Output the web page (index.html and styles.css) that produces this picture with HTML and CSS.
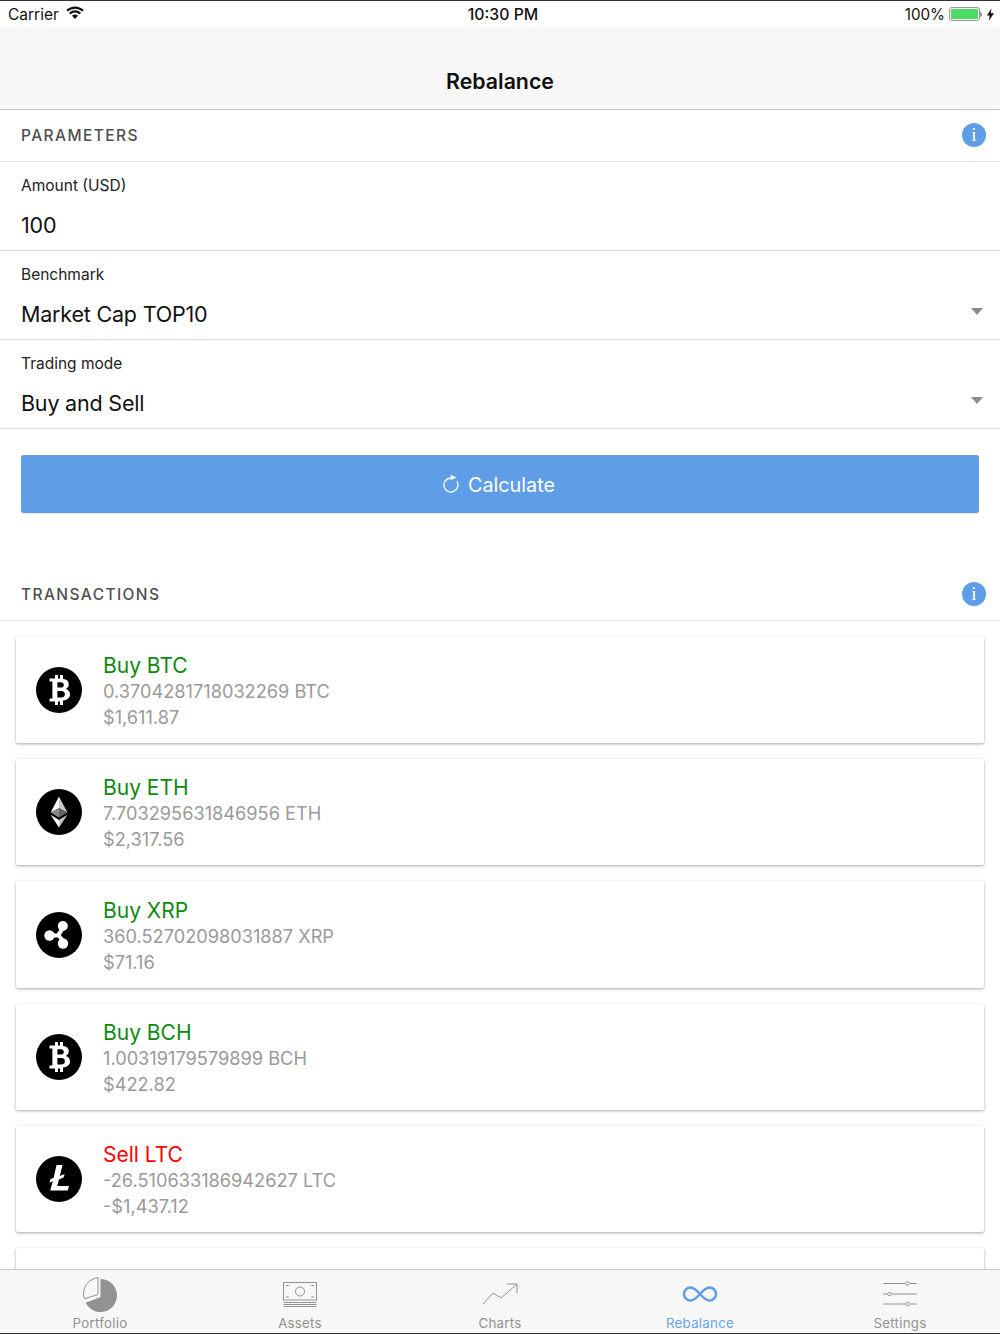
FILE: index.html
```html
<!DOCTYPE html>
<html lang="en">
<head>
<meta charset="utf-8">
<title>Rebalance</title>
<link rel="stylesheet" href="styles.css">
</head>
<body>
<div class="app">
  <div class="status">
    <div class="status-left"><span>Carrier</span>
      <svg class="wifi" viewBox="0 0 18 13" width="18" height="13"><path d="M1 4.800a11.500 11.500 0 0 1 16 0" fill="none" stroke="#111" stroke-width="2.200"/><path d="M3.800 7.600a7.400 7.400 0 0 1 10.400 0" fill="none" stroke="#111" stroke-width="2.200"/><path d="M6 9.800 9 13l3-3.200a4.200 4.200 0 0 0-6 0z" fill="#111"/></svg>
    </div>
    <div class="status-time">10:30 PM</div>
    <div class="status-right"><span>100%</span>
      <span class="battery"><span class="battery-fill"></span></span><span class="battery-tip"></span>
      <svg class="bolt" viewBox="0 0 8 14" width="7" height="13"><path d="M5 0 0 8h3l-1 6 6-8.500H4.500z" fill="#111"/></svg>
    </div>
  </div>
  <header class="nav"><h1>Rebalance</h1></header>
  <main class="content">
    <div class="section-head"><span>PARAMETERS</span><i class="info">i</i></div>
    <div class="field"><label>Amount (USD)</label><div class="value">100</div></div>
    <div class="field"><label>Benchmark</label><div class="value">Market Cap TOP10<b class="caret"></b></div></div>
    <div class="field"><label>Trading mode</label><div class="value">Buy and Sell<b class="caret"></b></div></div>
    <div class="button-wrap">
      <button class="calc">
        <svg viewBox="0 0 16 20" width="16" height="20"><path d="M7.700 4A7 7 0 1 0 13.700 7" fill="none" stroke="#fff" stroke-width="1.300"/><path d="M7.700.8v5.400l5.800-2.800z" fill="#fff"/></svg>
        <span>Calculate</span>
      </button>
    </div>
    <div class="section-head second"><span>TRANSACTIONS</span><i class="info">i</i></div>
    <div class="cards">
      <article class="card">
        <svg class="coin" viewBox="0 0 46 46"><circle cx="23" cy="23" r="23" fill="#000"/><path fill-rule="evenodd" fill="#fff" d="M13.500 11.500h5.500V8h3v3.500h2V8h3v3.700c3.700.6 5.800 2.500 5.800 5.600 0 2.100-1 3.700-3 4.600 2.700.8 4.200 2.800 4.200 5.400 0 3.600-2.500 5.900-7 6.300V38h-3v-3.500h-2V38h-3v-3.500h-5.500v-3h2.900V14.500h-2.900zm7.900 3.800v5.200h3.300c2 0 3.100-1 3.100-2.600s-1.100-2.600-3.100-2.600zm0 8.700v6.600h3.800c2.400 0 3.700-1.200 3.700-3.300s-1.300-3.300-3.700-3.300z"/></svg>
        <div class="card-text"><div class="title buy">Buy BTC</div><div class="line">0.3704281718032269 BTC</div><div class="line">$1,611.87</div></div>
      </article>
      <article class="card">
        <svg class="coin" viewBox="0 0 46 46"><circle cx="23" cy="23" r="23" fill="#000"/><path fill="#fff" d="M23 7.500v11.800l-8.400 4.200z"/><path fill="#c9c9c9" d="M23 7.500v11.800l8.400 4.200z"/><path fill="#8a8a8a" d="M23 19.300l-8.400 4.200 8.400 5z"/><path fill="#666" d="M23 19.300l8.400 4.200-8.400 5z"/><path fill="#fff" d="M14.600 25.800 23 38.500v-7.600z"/><path fill="#c9c9c9" d="M31.400 25.800 23 38.500v-7.600z"/></svg>
        <div class="card-text"><div class="title buy">Buy ETH</div><div class="line">7.703295631846956 ETH</div><div class="line">$2,317.56</div></div>
      </article>
      <article class="card">
        <svg class="coin" viewBox="0 0 46 46"><circle cx="23" cy="23" r="23" fill="#000"/><path d="M26.800 14Q25.500 20 22 23M13.500 23.500H22M27 31.500Q26 26 22 23" fill="none" stroke="#fff" stroke-width="3.800"/><circle cx="26.800" cy="14" r="5" fill="#fff"/><circle cx="13.500" cy="23.500" r="5.200" fill="#fff"/><circle cx="27" cy="31.500" r="5.200" fill="#fff"/></svg>
        <div class="card-text"><div class="title buy">Buy XRP</div><div class="line">360.52702098031887 XRP</div><div class="line">$71.16</div></div>
      </article>
      <article class="card">
        <svg class="coin" viewBox="0 0 46 46"><circle cx="23" cy="23" r="23" fill="#000"/><path fill-rule="evenodd" fill="#fff" d="M13.500 11.500h5.500V8h3v3.500h2V8h3v3.700c3.700.6 5.800 2.500 5.800 5.600 0 2.100-1 3.700-3 4.600 2.700.8 4.200 2.800 4.200 5.400 0 3.600-2.500 5.900-7 6.300V38h-3v-3.500h-2V38h-3v-3.500h-5.500v-3h2.900V14.500h-2.900zm7.900 3.800v5.200h3.300c2 0 3.100-1 3.100-2.600s-1.100-2.600-3.100-2.600zm0 8.700v6.600h3.800c2.400 0 3.700-1.200 3.700-3.300s-1.300-3.300-3.700-3.300z"/></svg>
        <div class="card-text"><div class="title buy">Buy BCH</div><div class="line">1.00319179579899 BCH</div><div class="line">$422.82</div></div>
      </article>
      <article class="card">
        <svg class="coin" viewBox="0 0 46 46"><circle cx="23" cy="23" r="23" fill="#000"/><path fill="#fff" d="M20.500 9h6l-2.700 11 4.800-2-1 3.600-4.700 2-1.700 6.400h11.800l-1.200 4.600H14.200l2.600-9.300-3.300 1.300.9-3.400 3.300-1.400z"/></svg>
        <div class="card-text"><div class="title sell">Sell LTC</div><div class="line">-26.510633186942627 LTC</div><div class="line">-$1,437.12</div></div>
      </article>
      <article class="card clipped" aria-hidden="true"></article>
    </div>
  </main>
  <nav class="tabs">
    <div class="tab">
      <svg viewBox="0 0 36 36" width="36" height="36"><path d="M18.500 3a16.500 16.500 0 1 1-14.800 23.800L18.500 21z" fill="#929292"/><path d="M16 1.500v17L2.300 22.800A16.500 16.500 0 0 1 16 1.500z" fill="#f8f8f8" stroke="#929292" stroke-width="1"/></svg>
      <span>Portfolio</span>
    </div>
    <div class="tab">
      <svg viewBox="0 0 36 36" width="36" height="36"><g fill="none" stroke="#929292"><rect x="1.500" y="6.500" width="33" height="17.500"/><circle cx="18" cy="15.500" r="4.500"/><path d="M4 9.500h3M29 9.500h3M4 21h3M29 21h3"/><path d="M1.500 26.500h33M1.500 28.500h33M1.500 30.500h33"/></g></svg>
      <span>Assets</span>
    </div>
    <div class="tab">
      <svg viewBox="0 0 36 36" width="36" height="36"><path d="M1 28 11 17l8 5L34.500 8.500M25 8h10v9.500" fill="none" stroke="#929292" stroke-width="1"/></svg>
      <span>Charts</span>
    </div>
    <div class="tab active">
      <svg viewBox="0 0 36 36" width="36" height="36"><path d="M18 18c-3.500-4-6-6.500-9.500-6.500a6.500 6.500 0 0 0 0 13c3.500 0 6-2.500 9.500-6.500s6-6.500 9.500-6.500a6.500 6.500 0 0 1 0 13c-3.500 0-6-2.500-9.500-6.500z" fill="none" stroke="#5f9de6" stroke-width="2.500"/></svg>
      <span>Rebalance</span>
    </div>
    <div class="tab">
      <svg viewBox="0 0 36 36" width="36" height="36"><g fill="none" stroke="#929292"><path d="M1 7.500h22M28 7.500h7M1 18h4M10 18h25M1 28h22M28 28h7"/><circle cx="25.500" cy="7.500" r="1.800"/><circle cx="7.500" cy="18" r="1.800"/><circle cx="25.500" cy="28" r="1.800"/></g></svg>
      <span>Settings</span>
    </div>
  </nav>
</div>
</body>
</html>
```
FILE: styles.css
```css
* { box-sizing: border-box; }
html, body { margin: 0; padding: 0; }
body { font-family: Inter, "Liberation Sans", sans-serif; color: #111; background: #fff; }
.app { width: 1000px; height: 1334px; display: flex; flex-direction: column; overflow: hidden; border-top: 1px solid #333; border-bottom: 1px solid #333; }
.status { height: 26px; flex: none; display: grid; grid-template-columns: 1fr auto 1fr; align-items: center; padding: 0 6px 0 8px; font-size: 15.500px; background: #fff; }
.status-left { display: flex; align-items: center; gap: 7px; }
.wifi { margin-top: -3px; }
.status-time { font-weight: 500; font-size: 15.800px; padding-left: 4px; }
.status-right { display: flex; align-items: center; justify-content: flex-end; }
.status-right span:first-child { font-size: 15.200px; }
.battery { width: 31px; height: 14px; border: 1px solid #999; border-radius: 3px; padding: 1px; margin-left: 4px; display: block; }
.battery-fill { display: block; height: 100%; background: #4cd964; border-radius: 1px; }
.battery-tip { width: 2px; height: 5px; background: #999; border-radius: 0 2px 2px 0; margin-right: 5px; }
.nav { height: 83px; flex: none; background: #f7f7f7; border-bottom: 1px solid #c4c4c4; display: flex; align-items: center; justify-content: center; padding-top: 25px; }
.nav h1 { margin: 0; font-size: 21.300px; font-weight: 600; color: #111; }
.content { flex: 1; min-height: 0; overflow: hidden; }
.section-head { height: 51.500px; display: flex; align-items: center; justify-content: space-between; padding: 0 14px 0 21px; border-bottom: 1px solid #e2e2e2; font-size: 15.500px; font-weight: 500; letter-spacing: 1.400px; color: #4f4f4f; }
.section-head.second { margin-top: 56px; height: 52px; }
.info { width: 24px; height: 24px; border-radius: 50%; background: #5f9de6; color: #fff; font: normal 19px/24px "Liberation Serif", serif; letter-spacing: 0; text-align: center; }
.field { height: 89.100px; padding: 13px 17px 0 21px; border-bottom: 1px solid #dcdcdc; }
.field label { display: block; font-size: 15.500px; line-height: 21px; color: #222; }
.value { margin-top: 15px; font-size: 21.500px; letter-spacing: -.2px; line-height: 28px; color: #111; display: flex; justify-content: space-between; align-items: center; }
.caret { width: 0; height: 0; border-left: 6.500px solid transparent; border-right: 6.500px solid transparent; border-top: 7px solid #8c8c8c; margin-top: -4px; }
.button-wrap { padding: 26px 21px 0; }
.calc { width: 100%; height: 58px; border: 0; border-radius: 3px; background: #5f9de6; color: #fff; font: 400 19.800px Inter, sans-serif; display: flex; align-items: center; justify-content: center; gap: 9px; padding: 0 2px 0 0; box-shadow: 0 1px 1px rgba(0,0,0,.1); }
.calc span { padding-top: 2px; }
.cards { padding: 16px 16px 0; display: flex; flex-direction: column; gap: 16px; }
.card { height: 106.300px; flex: none; background: #fff; border-radius: 2px; box-shadow: 0 1px 3px rgba(0,0,0,.35); display: flex; align-items: center; padding-left: 20px; }
.coin { width: 46px; height: 46px; flex: none; margin-right: 21px; }
.card-text { font-size: 18.200px; line-height: 26px; padding-top: 3px; }
.title { font-size: 21px; line-height: 26px; margin-bottom: -1px; }
.buy { color: #0e8a0e; }
.sell { color: #fe0000; }
.line { color: #9a9a9a; }
.tabs { height: 64px; flex: none; background: #f7f7f7; border-top: 1px solid #c4c4c4; display: grid; grid-template-columns: repeat(5, 1fr); position: relative; }
.tab { display: flex; flex-direction: column; align-items: center; font-size: 13.300px; letter-spacing: .25px; color: #929292; padding-top: 6px; }
.tab svg { display: block; height: 36px; }
.tab span { margin-top: 3px; line-height: 16px; }
.tab.active { color: #6aa5ea; }
```
